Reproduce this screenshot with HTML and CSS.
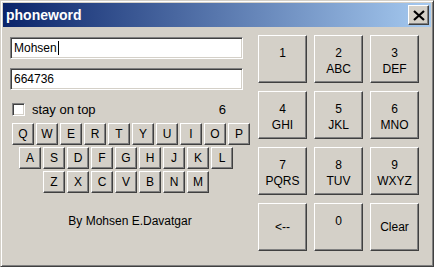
FILE: index.html
```html
<!DOCTYPE html>
<html lang="en">
<head>
    <meta charset="UTF-8">
    <title>phoneword</title>
    <link rel="stylesheet" href="styles.css">
</head>
<body>
    <div class="window">
        <div class="titlebar">
            <span class="title">phoneword</span>
            <span class="close">
                <svg width="12" height="11" viewBox="0 0 12 11">
                    <path d="M1 1 L11 10 M11 1 L1 10" stroke="#000" stroke-width="2.2" fill="none"/>
                </svg>
            </span>
        </div>
        <div class="content">
            <div class="left">
                <div class="field">Mohsen<span class="caret"></span></div>
                <div class="field">664736</div>
                <div class="option">
                    <span class="check"></span>
                    <span class="label">stay on top</span>
                    <span class="count">6</span>
                </div>
                <div class="keyboard">
                    <div class="row">
                        <span class="key">Q</span><span class="key">W</span><span class="key">E</span><span class="key">R</span><span class="key">T</span><span class="key">Y</span><span class="key">U</span><span class="key">I</span><span class="key">O</span><span class="key">P</span>
                    </div>
                    <div class="row r2">
                        <span class="key">A</span><span class="key">S</span><span class="key">D</span><span class="key">F</span><span class="key">G</span><span class="key">H</span><span class="key">J</span><span class="key">K</span><span class="key">L</span>
                    </div>
                    <div class="row r3">
                        <span class="key">Z</span><span class="key">X</span><span class="key">C</span><span class="key">V</span><span class="key">B</span><span class="key">N</span><span class="key">M</span>
                    </div>
                </div>
                <div class="credit">By Mohsen E.Davatgar</div>
            </div>
            <div class="pad">
                <div class="btn"><span>1</span></div>
                <div class="btn"><span>2</span><span>ABC</span></div>
                <div class="btn"><span>3</span><span>DEF</span></div>
                <div class="btn"><span>4</span><span>GHI</span></div>
                <div class="btn"><span>5</span><span>JKL</span></div>
                <div class="btn"><span>6</span><span>MNO</span></div>
                <div class="btn"><span>7</span><span>PQRS</span></div>
                <div class="btn"><span>8</span><span>TUV</span></div>
                <div class="btn"><span>9</span><span>WXYZ</span></div>
                <div class="btn mid"><span>&lt;--</span></div>
                <div class="btn"><span>0</span></div>
                <div class="btn mid"><span>Clear</span></div>
            </div>
        </div>
    </div>
</body>
</html>
```

FILE: styles.css
```css
body
{
    margin: 0;
    font-family: "Liberation Sans", Arial, sans-serif;
    font-size: 12px;
    color: #000;
}
.window
{
    width: 434px;
    height: 267px;
    box-sizing: border-box;
    background: #d4d0c8;
    border: 1px solid;
    border-color: #d4d0c8 #404040 #404040 #d4d0c8;
    box-shadow: inset 1px 1px #fff, inset -1px -1px #808080;
    padding: 2px;
    display: flex;
    flex-direction: column;
}
.titlebar
{
    height: 24px;
    background: linear-gradient(to right, #0a246a, #a6caf0);
    display: flex;
    align-items: center;
    justify-content: space-between;
    padding: 0 2px 0 3px;
    color: #fff;
    font-weight: bold;
    font-size: 14px;
}
.close
{
    width: 21px;
    height: 20px;
    box-sizing: border-box;
    background: #d4d0c8;
    border: 1px solid;
    border-color: #fff #404040 #404040 #fff;
    box-shadow: inset -1px -1px #808080;
    display: flex;
    align-items: center;
    justify-content: center;
}
.content
{
    display: flex;
    gap: 8px;
    padding: 8px 0 0 7px;
}
.left
{
    width: 240px;
    padding-top: 2px;
    display: flex;
    flex-direction: column;
}
.field
{
    width: 233px;
    height: 22px;
    box-sizing: border-box;
    background: #fff;
    border: 1px solid;
    border-color: #808080 #fff #fff #808080;
    box-shadow: inset 1px 1px #404040, inset -1px -1px #d4d0c8;
    padding: 0 3px;
    display: flex;
    align-items: center;
}
.field + .field
{
    margin-top: 9px;
}
.caret
{
    width: 1px;
    height: 14px;
    background: #000;
    margin-left: 1px;
}
.option
{
    margin-top: 12px;
    height: 14px;
    display: flex;
    align-items: center;
    padding-left: 2px;
}
.check
{
    width: 13px;
    height: 13px;
    box-sizing: border-box;
    background: #fff;
    border: 1px solid;
    border-color: #808080 #fff #fff #808080;
    box-shadow: inset 1px 1px #404040, inset -1px -1px #d4d0c8;
}
.label
{
    margin-left: 7px;
    font-size: 13px;
}
.count
{
    margin-left: auto;
    margin-right: 24px;
    font-size: 13px;
}
.keyboard
{
    margin-top: 7px;
    margin-left: 2px;
    display: flex;
    flex-direction: column;
    gap: 2px;
}
.row
{
    display: flex;
    gap: 2px;
}
.row.r2
{
    padding-left: 7px;
}
.row.r3
{
    padding-left: 31px;
}
.key
{
    width: 22px;
    height: 22px;
    box-sizing: border-box;
    border: 1px solid;
    border-color: #fff #404040 #404040 #fff;
    box-shadow: inset -1px -1px #808080;
    display: flex;
    align-items: center;
    justify-content: center;
}
.credit
{
    margin-top: 21px;
    line-height: 14px;
    text-align: center;
}
.pad
{
    display: grid;
    grid-template-columns: repeat(3, 49px);
    grid-auto-rows: 48px;
    gap: 8px 7px;
}
.btn
{
    box-sizing: border-box;
    border: 1px solid;
    border-color: #fff #404040 #404040 #fff;
    box-shadow: inset -1px -1px #808080;
    display: flex;
    flex-direction: column;
    align-items: center;
    padding-top: 9px;
    line-height: 16px;
}
.btn.mid
{
    justify-content: center;
    padding-top: 0;
}
```
